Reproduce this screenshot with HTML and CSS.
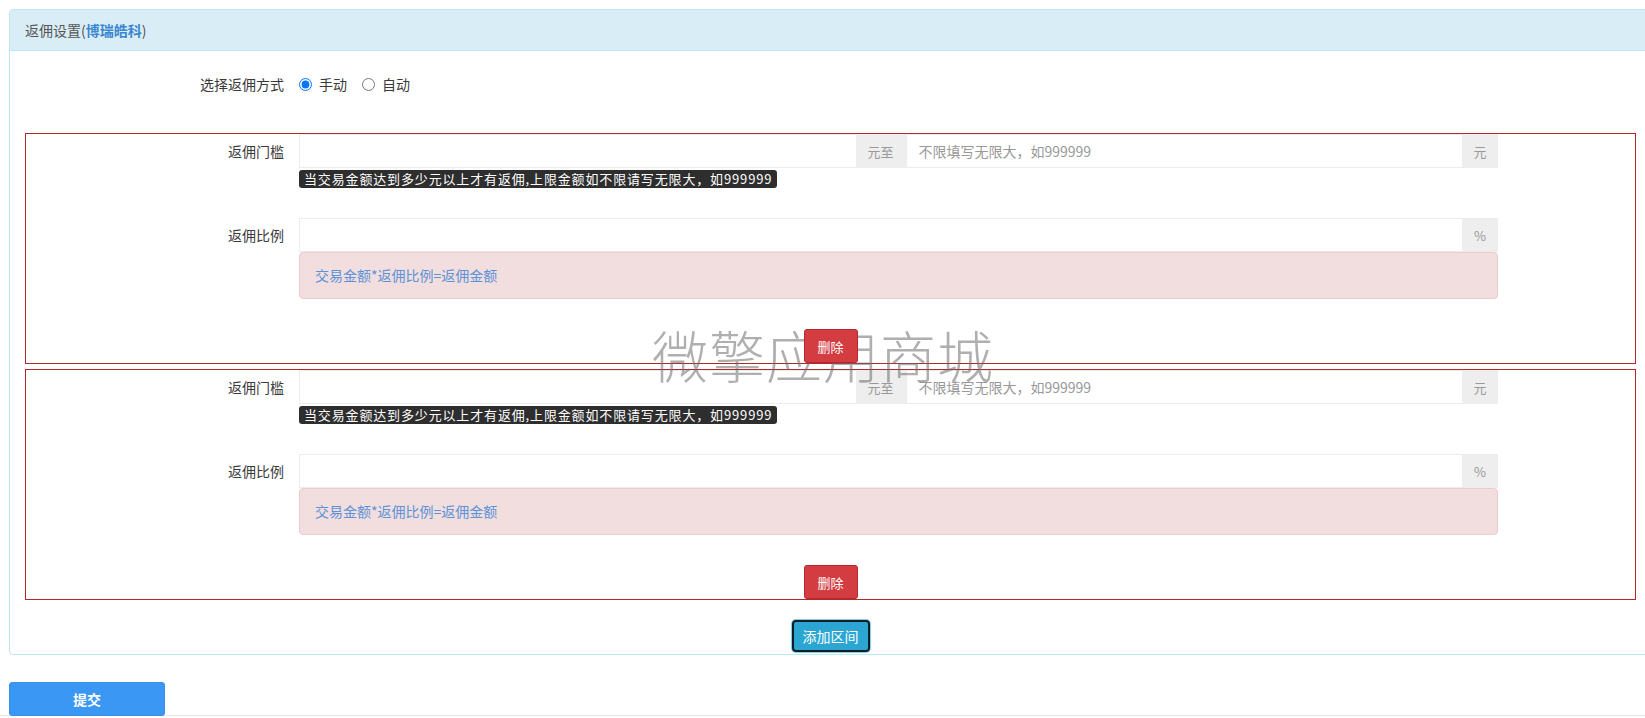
FILE: index.html
```html
<!DOCTYPE html>
<html lang="zh-CN">
<head>
<meta charset="utf-8">
<title>返佣设置</title>
<link rel="stylesheet" href="styles.css">
</head>
<body>
<div class="page">
  <div class="panel">
    <div class="panel-heading">返佣设置(<span class="brand">博瑞皓科</span>)</div>
    <div class="panel-body">
      <div class="mode-row">
        <label class="mode-label">选择返佣方式</label>
        <div class="radios">
          <label class="radio"><input type="radio" name="mode" checked>手动</label>
          <label class="radio"><input type="radio" name="mode">自动</label>
        </div>
      </div>

      <div class="range-box">
        <div class="field">
          <label class="field-label">返佣门槛</label>
          <div class="field-control">
            <div class="input-group">
              <input class="form-input grow" type="text">
              <span class="addon addon-wide">元至</span>
              <input class="form-input grow" type="text" placeholder="不限填写无限大，如999999">
              <span class="addon">元</span>
            </div>
            <span class="tip">当交易金额达到多少元以上才有返佣,上限金额如不限请写无限大，如999999</span>
          </div>
        </div>
        <div class="field field-rate">
          <label class="field-label">返佣比例</label>
          <div class="field-control">
            <div class="input-group">
              <input class="form-input grow" type="text">
              <span class="addon">%</span>
            </div>
            <div class="alert">交易金额*返佣比例=返佣金额</div>
          </div>
        </div>
        <div class="box-actions"><button class="btn btn-danger" type="button">删除</button></div>
      </div>

      <div class="range-box">
        <div class="field">
          <label class="field-label">返佣门槛</label>
          <div class="field-control">
            <div class="input-group">
              <input class="form-input grow" type="text">
              <span class="addon addon-wide">元至</span>
              <input class="form-input grow" type="text" placeholder="不限填写无限大，如999999">
              <span class="addon">元</span>
            </div>
            <span class="tip">当交易金额达到多少元以上才有返佣,上限金额如不限请写无限大，如999999</span>
          </div>
        </div>
        <div class="field field-rate">
          <label class="field-label">返佣比例</label>
          <div class="field-control">
            <div class="input-group">
              <input class="form-input grow" type="text">
              <span class="addon">%</span>
            </div>
            <div class="alert">交易金额*返佣比例=返佣金额</div>
          </div>
        </div>
        <div class="box-actions"><button class="btn btn-danger" type="button">删除</button></div>
      </div>

      <div class="add-row"><button class="btn btn-add" type="button">添加区间</button></div>
    </div>
  </div>

  <div class="submit-bar"><button class="btn btn-submit" type="button">提交</button></div>

  <div class="watermark">微擎应用商城</div>
</div>
</body>
</html>
```

FILE: styles.css
```css
html, body {
  margin: 0;
  padding: 0;
  background: #fff;
  overflow: hidden;
}
body {
  font-family: "Noto Sans CJK SC", "Microsoft YaHei", "Liberation Sans", sans-serif;
  font-size: 14px;
  color: #3a3a3a;
}
.page {
  position: relative;
  width: 1645px;
  height: 718px;
  padding-top: 9px;
  box-sizing: border-box;
}
.panel {
  margin-left: 9px;
  width: 1643px;
  box-sizing: border-box;
  border: 1px solid #bce8f1;
  border-radius: 4px;
  background: #fff;
}
.panel-heading {
  height: 40px;
  line-height: 40px;
  padding: 0 15px;
  background: #d9edf7;
  border-bottom: 1px solid #bce8f1;
  border-radius: 3px 3px 0 0;
  color: #555;
  font-size: 14px;
}
.brand {
  color: #3a86d0;
  font-weight: bold;
}
.panel-body {
  padding: 16px 15px 0 15px;
}
.mode-row {
  display: grid;
  grid-template-columns: 259px auto;
  column-gap: 15px;
  height: 34px;
  align-items: center;
  margin-bottom: 32px;
}
.mode-label {
  text-align: right;
}
.radios {
  display: flex;
  align-items: center;
  gap: 15px;
}
.radio {
  display: flex;
  align-items: center;
  gap: 7px;
}
.radio input {
  margin: 0;
  width: 13px;
  height: 13px;
}
.range-box {
  border: 1px solid #b3272d;
  margin-bottom: 5px;
  position: relative;
}
.field {
  display: grid;
  grid-template-columns: 258px 1199px;
  column-gap: 15px;
}
.field-label {
  text-align: right;
  height: 34px;
  line-height: 34px;
}
.field-control {
  display: flex;
  flex-direction: column;
  align-items: flex-start;
}
.input-group {
  display: flex;
  width: 100%;
  height: 34px;
}
.form-input {
  box-sizing: border-box;
  height: 34px;
  border: 1px solid #ececec;
  border-right: none;
  padding: 0 12px;
  font-family: inherit;
  font-size: 14px;
  color: #555;
  background: #fff;
  outline: none;
  min-width: 0;
}
.form-input::placeholder {
  color: #999;
}
.grow {
  flex: 1 1 0;
}
.addon {
  box-sizing: border-box;
  width: 36px;
  height: 34px;
  line-height: 34px;
  text-align: center;
  background: #eee;
  color: #999;
  font-size: 13px;
  border-top: 1px solid #ececec;
  border-bottom: 1px solid #ececec;
}
.addon-wide {
  width: 50px;
}
.tip {
  margin-top: 2px;
  height: 18px;
  line-height: 18px;
  padding: 0 5px;
  background: #2e2e2e;
  color: #fff;
  font-size: 13px;
  letter-spacing: 0.85px;
  border-radius: 3px;
  white-space: nowrap;
}
.field-rate {
  margin-top: 30px;
}
.alert {
  box-sizing: border-box;
  width: 100%;
  height: 47px;
  line-height: 45px;
  padding: 0 15px;
  background: #f2dede;
  border: 1px solid #ebccd1;
  border-radius: 4px;
  color: #5b92d8;
  font-size: 14px;
}
.box-actions {
  display: flex;
  justify-content: center;
  margin-top: 30px;
}
.btn {
  font-family: inherit;
  cursor: pointer;
  box-sizing: border-box;
}
.btn-danger {
  position: relative;
  z-index: 2;
  width: 54px;
  height: 34px;
  padding: 0;
  background: #d33c41;
  border: 1px solid #b8262c;
  border-radius: 3px;
  color: #fff;
  font-size: 13px;
}
.add-row {
  display: flex;
  justify-content: center;
  padding-top: 15px;
  padding-bottom: 2px;
}
.btn-add {
  width: 78px;
  height: 32px;
  padding: 0;
  background: #2ba6d2;
  border: 2px solid #0e1e27;
  border-radius: 4px;
  box-shadow: 0 0 0 1px #86cfe8;
  color: #fff;
  font-size: 14px;
}
.submit-bar {
  margin-top: 27px;
  padding-left: 9px;
  height: 33px;
  border-bottom: 1px solid #e6e6e6;
}
.btn-submit {
  width: 156px;
  height: 34px;
  padding: 0;
  background: #3a97f3;
  border: 1px solid #3890ea;
  border-radius: 3px;
  color: #fff;
  font-size: 14px;
  font-weight: bold;
}
.watermark {
  position: absolute;
  left: 652px;
  top: 314px;
  z-index: 1;
  font-size: 56px;
  line-height: 80px;
  font-weight: 300;
  letter-spacing: 1px;
  color: rgba(110, 110, 110, 0.55);
  pointer-events: none;
  white-space: nowrap;
}
```
